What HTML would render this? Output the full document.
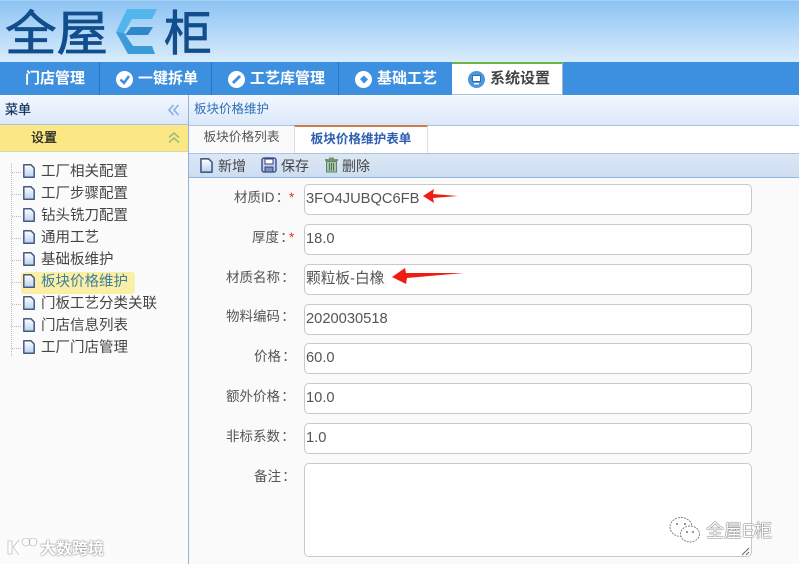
<!DOCTYPE html>
<html lang="zh-CN"><head><meta charset="utf-8"><style>
*{box-sizing:border-box}
html,body{margin:0;padding:0}
body{width:799px;height:564px;position:relative;overflow:hidden;background:#fafafa;font-family:"Liberation Sans","Noto Sans CJK SC",sans-serif;font-size:14px;color:#444}
.a{position:absolute}
#hd{left:0;top:0;width:799px;height:62px;background:linear-gradient(#8cc3f3,#d9ecfc);border-top:1px solid #a8d0f3}
#nav{left:0;top:62px;width:799px;height:33px;background:#3d8fe0}
.n{position:absolute;top:0;height:33px;line-height:33px;color:#fff;font-weight:bold;font-size:15px;white-space:nowrap}
.sep{position:absolute;top:0;width:1px;height:33px;background:#2a75bd}
.ci{position:absolute;top:9px;width:17px;height:17px}
#act{left:452px;top:62px;width:111px;height:33px;background:#fff;border-top:2px solid #6cb33f;border-right:1px solid #9db9d8;border-bottom:1px solid #a5c0dc}
#side{left:0;top:95px;width:189px;height:469px;background:#fbfbfb;border-right:1px solid #8fb4de}
#sh{left:0;top:96px;width:188px;height:29px;background:linear-gradient(#f2f7fe,#dbe8fa);color:#12345c;font-size:13px;line-height:27px;padding-left:5px;border-bottom:1px solid #a9c3e0;-webkit-text-stroke:.25px #12345c}
#acc{left:0;top:125px;width:188px;height:27px;background:#fbe884;color:#222;font-size:13px;line-height:25px;padding-left:31px;border-bottom:1px solid #d9d9a8;-webkit-text-stroke:.25px #222}
.t{position:absolute;left:41px;font-size:14.5px;color:#444;line-height:18px;white-space:nowrap}
.d{position:absolute;left:23px;width:12px;height:14px}
.dot{position:absolute;left:12px;width:9px;border-top:1px dotted #bbb}
#crumb{left:189px;top:96px;width:610px;height:29px;background:linear-gradient(#f2f7fe,#dbe8fa);color:#2f6fb5;font-size:12.5px;line-height:27px;padding-left:5px}
#tabs{left:189px;top:125px;width:610px;height:28px;background:#fff;border-top:1px solid #a9c3e0}
#tab1{left:189px;top:126px;width:105px;height:26px;background:#fafafa;color:#555;font-size:12.7px;line-height:23px;text-align:center}
#tab2{left:294px;top:125px;width:134px;height:28px;background:#fff;border-top:2px solid #cf7d4e;border-left:1px solid #ddd;border-right:1px solid #ddd;color:#2f5fb0;font-weight:bold;font-size:12.6px;line-height:25px;text-align:center}
#bar{left:189px;top:153px;width:610px;height:25px;background:linear-gradient(#dce7f5,#cddef2);border-top:1px solid #a9c3e0;border-bottom:1px solid #8fb4de}
.b{position:absolute;top:157px;font-size:14px;color:#444;line-height:18px;white-space:nowrap}
.l{position:absolute;font-size:13.5px;color:#555;line-height:18px;white-space:nowrap}
.l i{font-style:normal;color:#e33;position:absolute;left:55px;top:0}
.l b{font-weight:normal;display:inline-block;width:14px;text-align:center;margin-left:1px}
.f{position:absolute;left:304px;width:448px;height:31px;background:#fff;border:1px solid #c9c9c9;border-radius:5px;font-size:14.7px;line-height:28px;padding-left:1px;color:#555;white-space:nowrap}
</style></head><body>
<div id="hd" class="a"></div>
<svg class="a" style="left:0;top:0" width="230" height="62">
<g font-family="Noto Sans CJK SC,sans-serif" fill="#124d8c" stroke="#124d8c" stroke-width=".8">
<text x="5" y="50" font-size="48" textLength="103" lengthAdjust="spacingAndGlyphs">全屋</text>
<text x="164" y="50" font-size="48" textLength="48" lengthAdjust="spacingAndGlyphs">柜</text>
</g>
<path d="M127 9H157L152 19H132L124 33L133 46H152L155 54H128L116 32Z" fill="#52b6ec"/>
<path d="M116 32L124 33L133 46H152L155 54H128Z" fill="#3a9bd8"/>
<path d="M131 27H153L148 35H125Z" fill="#2f86c8"/>
</svg>
<div id="nav" class="a">
<div class="n" style="left:25px">门店管理</div><div class="sep" style="left:99px"></div>
<svg class="ci" style="left:116px" viewBox="0 0 17 17"><circle cx="8.5" cy="8.5" r="8.5" fill="#fff"/><path d="M4.5 8.5L8 12L13 5" fill="none" stroke="#3d8fe0" stroke-width="2.5"/></svg>
<div class="n" style="left:138px">一键拆单</div><div class="sep" style="left:211px"></div>
<svg class="ci" style="left:228px" viewBox="0 0 17 17"><circle cx="8.5" cy="8.5" r="8.5" fill="#fff"/><path d="M5 12L12 5" stroke="#3d8fe0" stroke-width="3"/></svg>
<div class="n" style="left:250px">工艺库管理</div><div class="sep" style="left:338px"></div>
<svg class="ci" style="left:355px" viewBox="0 0 17 17"><circle cx="8.5" cy="8.5" r="8.5" fill="#fff"/><path d="M5 8L9 4.500L13 8.500L9 12.500Z" fill="#3d8fe0"/></svg>
<div class="n" style="left:377px">基础工艺</div>
</div>
<div id="act" class="a"></div>
<svg class="a" style="left:468px;top:71px" width="17" height="17" viewBox="0 0 17 17"><circle cx="8.500" cy="8.500" r="8.500" fill="#4a97dc"/><rect x="4.500" y="4.500" width="8" height="6" fill="#fff" stroke="#2c6fb0"/><rect x="6" y="12" width="5" height="1.500" fill="#fff"/></svg>
<div class="n a" style="left:490px;top:62px;color:#444;font-weight:bold">系统设置</div>

<div id="side" class="a"></div>
<div id="sh" class="a">菜单</div>
<svg class="a" style="left:168px;top:104px" width="12" height="12" viewBox="0 0 12 12"><path d="M5.500 1L1 6L5.500 11M10.500 1L6 6L10.500 11" fill="none" stroke="#7fb0e6" stroke-width="1.600"/></svg>
<div id="acc" class="a">设置</div>
<svg class="a" style="left:168px;top:132px" width="12" height="12" viewBox="0 0 12 12"><path d="M1 5.500L6 1L11 5.500M1 10.500L6 6L11 10.500" fill="none" stroke="#9fbf7f" stroke-width="1.600"/></svg>
<div class="a" style="left:11px;top:163px;height:193px;border-left:1px dotted #bbb"></div>
<div class="a" style="left:21px;top:272px;width:114px;height:22px;background:#fbeea6;border-radius:3px"></div>
<div class="dot" style="top:172px"></div><div class="dot" style="top:194px"></div><div class="dot" style="top:216px"></div><div class="dot" style="top:238px"></div><div class="dot" style="top:260px"></div><div class="dot" style="top:282px"></div><div class="dot" style="top:304px"></div><div class="dot" style="top:326px"></div><div class="dot" style="top:348px"></div>
<svg width="0" height="0" style="position:absolute"><defs><linearGradient id="g" x1="0" y1="0" x2="0" y2="1"><stop offset="0" stop-color="#fff"/><stop offset="1" stop-color="#b9d1f0"/></linearGradient><symbol id="doc" viewBox="0 0 12 14"><path d="M.8.800H8L11.200 4V13.200H.8Z" fill="url(#g)" stroke="#46597f" stroke-width="1.500" stroke-linejoin="round"/></symbol></defs></svg>
<svg class="d" style="top:164px"><use href="#doc"/></svg><div class="t" style="top:163px">工厂相关配置</div>
<svg class="d" style="top:186px"><use href="#doc"/></svg><div class="t" style="top:185px">工厂步骤配置</div>
<svg class="d" style="top:208px"><use href="#doc"/></svg><div class="t" style="top:207px">钻头铣刀配置</div>
<svg class="d" style="top:230px"><use href="#doc"/></svg><div class="t" style="top:229px">通用工艺</div>
<svg class="d" style="top:252px"><use href="#doc"/></svg><div class="t" style="top:251px">基础板维护</div>
<svg class="d" style="top:274px"><use href="#doc"/></svg><div class="t" style="top:273px;color:#3d7f9c">板块价格维护</div>
<svg class="d" style="top:296px"><use href="#doc"/></svg><div class="t" style="top:295px">门板工艺分类关联</div>
<svg class="d" style="top:318px"><use href="#doc"/></svg><div class="t" style="top:317px">门店信息列表</div>
<svg class="d" style="top:340px"><use href="#doc"/></svg><div class="t" style="top:339px">工厂门店管理</div>

<div id="crumb" class="a">板块价格维护</div>
<div id="tabs" class="a"></div>
<div id="tab1" class="a">板块价格列表</div>
<div id="tab2" class="a">板块价格维护表单</div>
<div id="bar" class="a"></div>
<svg class="a" style="left:200px;top:158px" width="13" height="15"><use href="#doc" width="13" height="15"/></svg><div class="b" style="left:218px">新增</div>
<svg class="a" style="left:261px;top:157px" width="16" height="16" viewBox="0 0 16 16"><rect x="1" y="1" width="14" height="14" rx="2" fill="#c3d4ee" stroke="#34407a" stroke-width="1.300"/><rect x="4" y="2" width="8" height="5" fill="#fff" stroke="#34407a"/><rect x="4" y="10" width="8" height="5" fill="#7f8fb8" stroke="#34407a"/></svg><div class="b" style="left:281px">保存</div>
<svg class="a" style="left:324px;top:157px" width="15" height="16" viewBox="0 0 15 16"><rect x="1" y="2" width="13" height="2" fill="#6f9478"/><rect x="5" y="0.500" width="5" height="2" fill="#6f9478"/><path d="M2.500 4.500H12.500V15H2.500Z" fill="#a9c4a9" stroke="#5f8568"/><path d="M5.500 6V13.500M7.500 6V13.500M9.500 6V13.500" stroke="#4f7558"/></svg><div class="b" style="left:342px">删除</div>

<div class="l" style="top:189px;left:234px">材质ID<b>：</b><i>*</i></div>
<div class="f" style="top:184px">3FO4JUBQC6FB</div>
<div class="l" style="top:229px;left:252px">厚度<b>：</b><i style="left:37px">*</i></div>
<div class="f" style="top:224px">18.0</div>
<div class="l" style="top:269px;left:226px">材质名称<b>：</b></div>
<div class="f" style="top:264px">颗粒板-白橡</div>
<div class="l" style="top:308px;left:226px">物料编码<b>：</b></div>
<div class="f" style="top:304px">2020030518</div>
<div class="l" style="top:348px;left:254px">价格<b>：</b></div>
<div class="f" style="top:343px">60.0</div>
<div class="l" style="top:388px;left:226px">额外价格<b>：</b></div>
<div class="f" style="top:383px">10.0</div>
<div class="l" style="top:428px;left:226px">非标系数<b>：</b></div>
<div class="f" style="top:423px">1.0</div>
<div class="l" style="top:468px;left:254px">备注<b>：</b></div>
<div class="f" style="top:463px;height:94px"></div>
<svg class="a" style="left:741px;top:547px" width="9" height="9"><path d="M1 8L8 1M5 8L8 5" stroke="#666"/></svg>

<svg class="a" style="left:422px;top:188px" width="38" height="17"><path d="M1 8L12 1L11 6L36 8L11 10L12 15Z" fill="#f01c14"/></svg>
<svg class="a" style="left:391px;top:267px" width="75" height="20"><path d="M1 10L14 1L15 6L73 6L16 11L15 17Z" fill="#f01c14"/></svg>

<div class="a" style="left:40px;top:539px;font-size:16px;line-height:22px;font-weight:bold;color:#fff;text-shadow:0 0 2px #888,0 0 1px #888;white-space:nowrap">大数跨境</div>
<svg class="a" style="left:7px;top:538px" width="32" height="18" viewBox="0 0 32 18"><g fill="none" stroke="#fff"><path d="M3 3V16M12 3L7 9L13 16" stroke-width="4"/><circle cx="19" cy="4" r="3" stroke-width="2"/><circle cx="26" cy="4" r="3" stroke-width="2"/></g><g fill="none" stroke="#aaa" stroke-width=".6"><path d="M1 3V16H5V3ZM12 2L6 9L12 17"/><circle cx="19" cy="4" r="4"/><circle cx="26" cy="4" r="4"/></g></svg>
<svg class="a" style="left:668px;top:515px" width="34" height="30" viewBox="0 0 34 30"><g fill="#fff" stroke="#777" stroke-width=".9" stroke-dasharray="2 1"><ellipse cx="13" cy="12" rx="11" ry="9.500"/><ellipse cx="22" cy="19" rx="9.500" ry="8"/></g><g fill="#777"><circle cx="9" cy="9" r="1"/><circle cx="17" cy="9" r="1"/><circle cx="19" cy="17" r="1"/><circle cx="25" cy="17" r="1"/></g></svg>
<div class="a" style="left:706px;top:518px;font-size:18px;line-height:26px;color:#fff;text-shadow:0 0 1px #333,0 0 1px #333;white-space:nowrap">全屋E柜</div>
</body></html>
